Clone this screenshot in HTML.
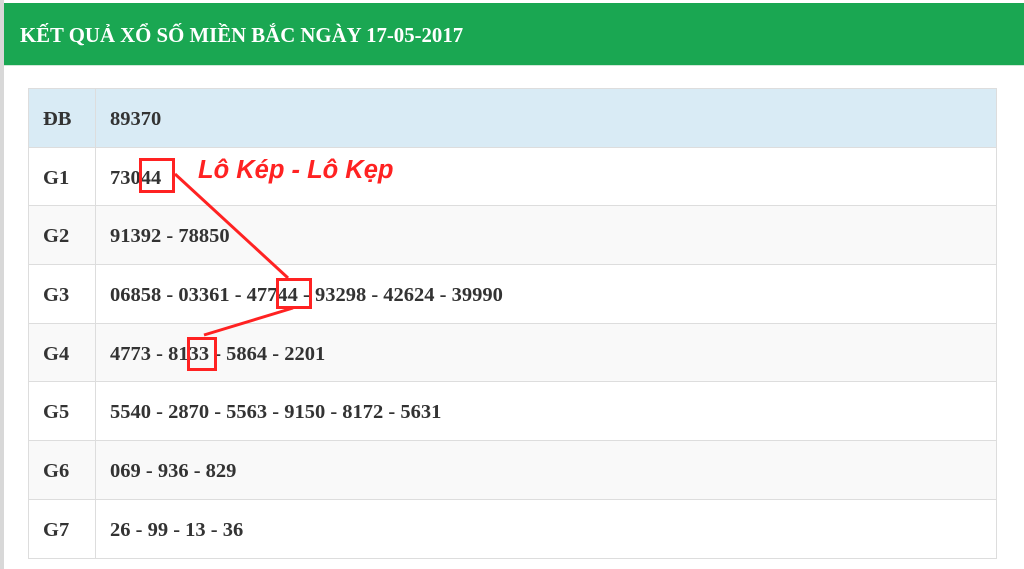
<!DOCTYPE html>
<html><head><meta charset="utf-8"><style>
body{margin:0;width:1024px;height:569px;background:#fff;position:relative;overflow:hidden;font-family:"Liberation Serif",serif}
.l{position:absolute;left:0;top:0;width:4px;height:569px;background:#d8d8d8}
.h{position:absolute;left:4px;top:3px;width:1020px;height:63px;background:#1aa752;color:#fff;font-weight:bold;font-size:20.8px;line-height:65px;padding-left:16px;box-sizing:border-box;border-bottom:1px solid #d0e8d8}
table{position:absolute;left:28px;top:88px;width:969px;border-collapse:collapse}
td{border:1px solid #ddd;height:58.7px;padding:3px 0 0 14px;box-sizing:border-box;font-weight:bold;font-size:20.5px;color:#333}
td:first-child{width:67px}
tr.d td{background:#d9ebf5}
tr.g td{background:#f9f9f9}
.b{position:absolute;border:3px solid #f22;box-sizing:border-box}
.t{position:absolute;left:198px;top:156px;color:#f22;font:italic bold 25.5px "Liberation Sans",sans-serif}
</style></head><body>
<div class="l"></div>
<div class="h">KẾT QUẢ XỔ SỐ MIỀN BẮC NGÀY 17-05-2017</div>
<table>
<tr class="d"><td>ĐB</td><td>89370</td></tr>
<tr><td>G1</td><td>73044</td></tr>
<tr class="g"><td>G2</td><td>91392 - 78850</td></tr>
<tr><td>G3</td><td>06858 - 03361 - 47744 - 93298 - 42624 - 39990</td></tr>
<tr class="g"><td>G4</td><td>4773 - 8133 - 5864 - 2201</td></tr>
<tr><td>G5</td><td>5540 - 2870 - 5563 - 9150 - 8172 - 5631</td></tr>
<tr class="g"><td>G6</td><td>069 - 936 - 829</td></tr>
<tr><td>G7</td><td>26 - 99 - 13 - 36</td></tr>
</table>
<div class="t">Lô Kép - Lô Kẹp</div>
<div class="b" style="left:139px;top:158px;width:36px;height:35px"></div>
<div class="b" style="left:276px;top:278px;width:36px;height:31px"></div>
<div class="b" style="left:187px;top:337px;width:30px;height:34px"></div>
<svg style="position:absolute;left:0;top:0" width="1024" height="569"><g stroke="#f22" stroke-width="3"><line x1="175" y1="174" x2="288" y2="278"/><line x1="293" y1="308" x2="204" y2="335"/></g></svg>
</body></html>
